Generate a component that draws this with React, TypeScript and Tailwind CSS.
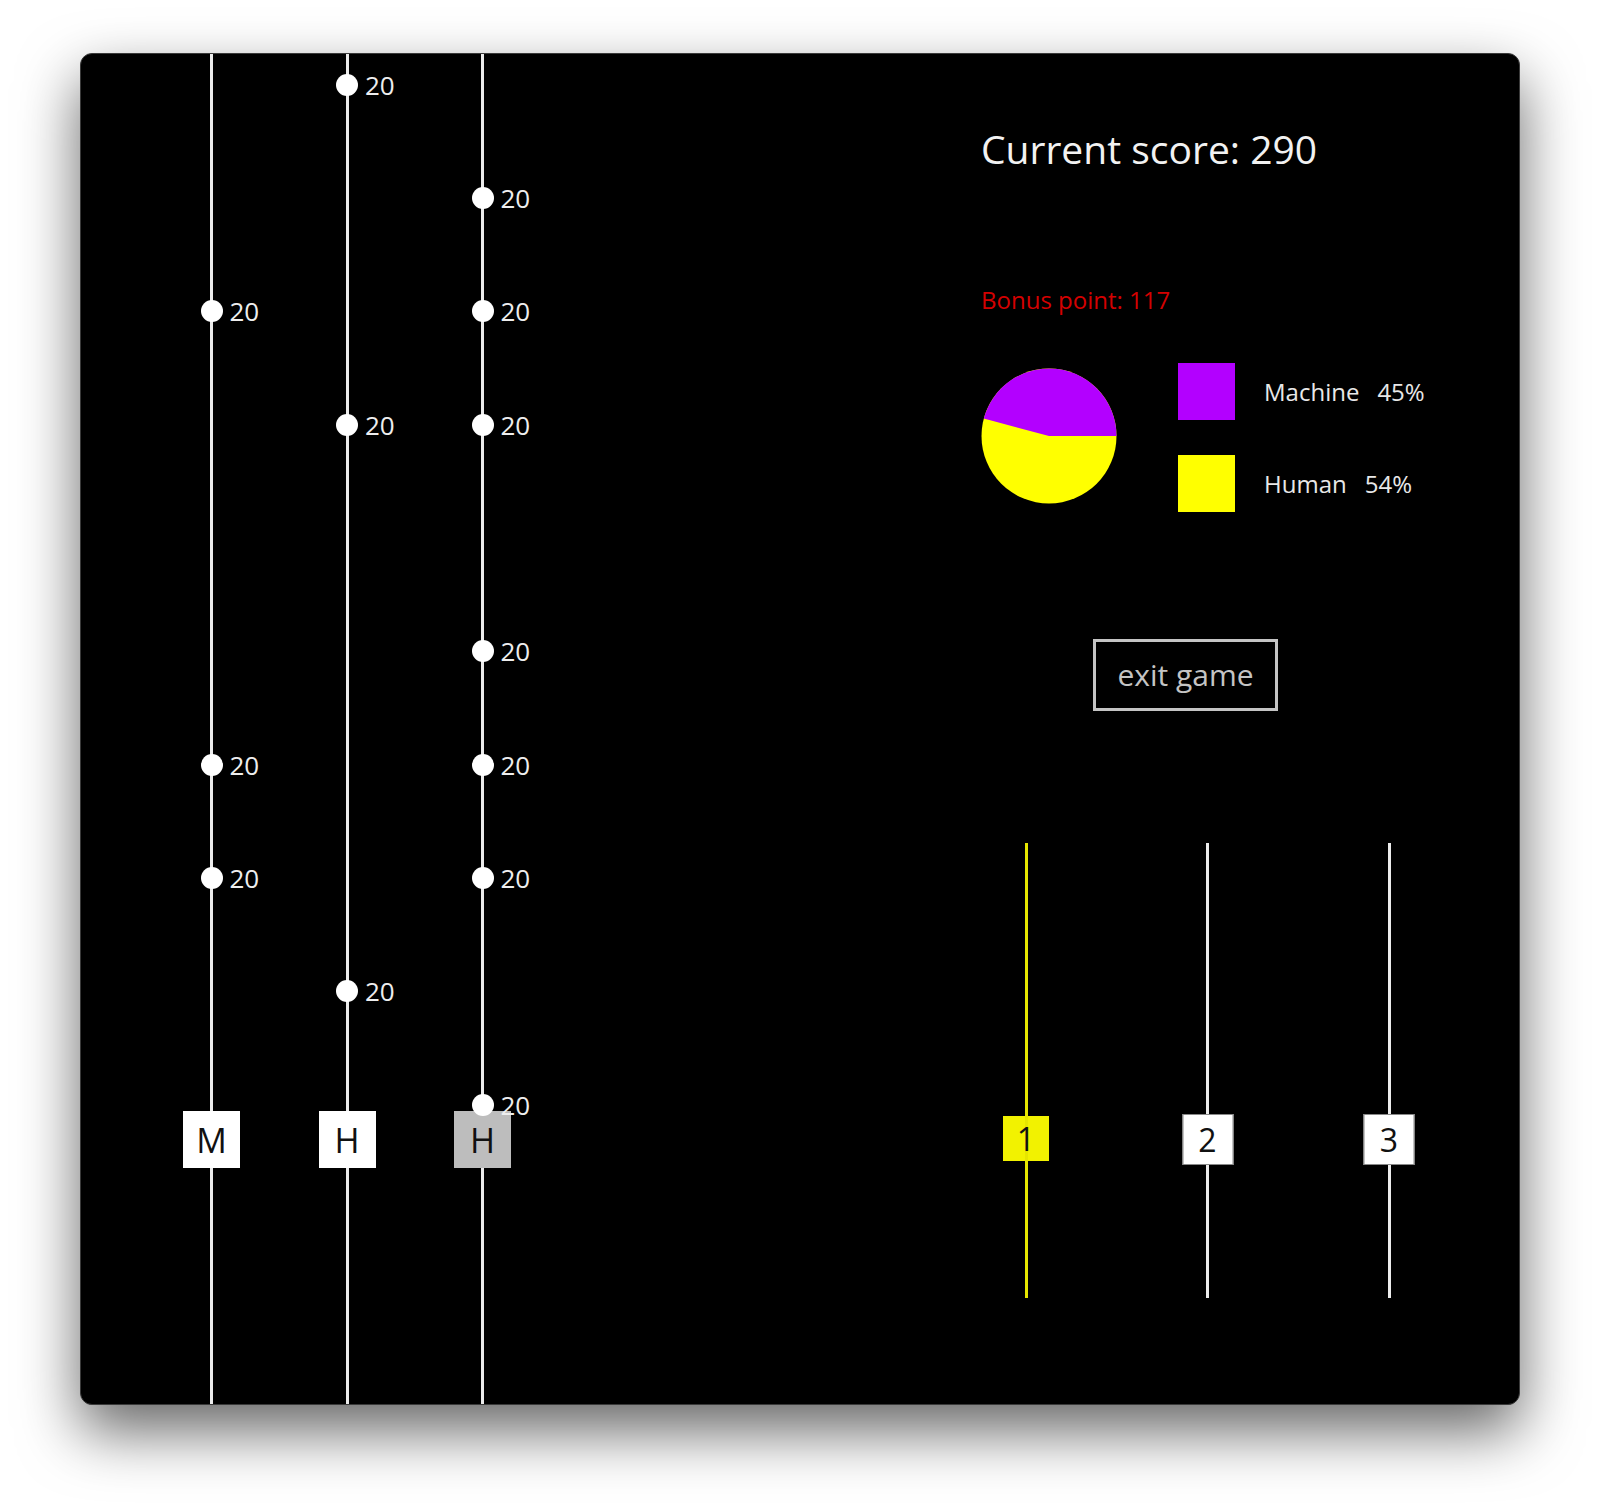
const lanes = [
  { label: "M", rows: [2, 6, 7], box: "bg-white" },
  { label: "H", rows: [0, 3, 8], box: "bg-white" },
  { label: "H", rows: [1, 2, 3, 5, 6, 7, 9], box: "bg-[#bdbdbd]" },
];

const sliders = [
  { n: "1", active: true },
  { n: "2", active: false },
  { n: "3", active: false },
];

function Lane({ label, rows, box }: { label: string; rows: number[]; box: string }) {
  return (
    <div className="relative h-full w-[135.5px] shrink-0">
      <div className="absolute top-0 bottom-0 left-[-1.5px] w-[3px] bg-[#ececec]" />
      <div
        className={`absolute left-[-28.5px] top-[1057px] flex h-[57px] w-[57px] items-center justify-center text-[34px] leading-none text-[#111] ${box}`}
      >
        {label}
      </div>
      <div className="relative flex flex-col pt-[19.7px]">
        {Array.from({ length: 10 }).map((_, i) => (
          <div key={i} className="h-[113.33px]">
            {rows.includes(i) && (
              <div className="-ml-[11px] flex h-[22px] items-center gap-[7px]">
                <span className="h-[22px] w-[22px] rounded-full bg-white" />
                <span className="text-[26px] leading-none text-[#eeeeee]">20</span>
              </div>
            )}
          </div>
        ))}
      </div>
    </div>
  );
}

function Pie() {
  return (
    <svg width="136" height="136" viewBox="0 0 136 136" className="mt-[5px] shrink-0">
      <circle cx="68" cy="68" r="67.5" fill="#ffff00" />
      <path d="M68 68 L135.5 68 A67.5 67.5 0 0 0 2.8 50.5 Z" fill="#b300ff" />
    </svg>
  );
}

export default function App() {
  return (
    <div className="min-h-[1511px] bg-white pt-[53px] pl-[80px] font-['Open_Sans',sans-serif]">
      <div className="flex h-[1352px] w-[1440px] overflow-hidden rounded-[12px] border border-[#3a3a3a] bg-black shadow-[0_26px_60px_rgba(0,0,0,0.6)]">
        <div className="flex h-full w-[900px] shrink-0 pl-[130.5px]">
          {lanes.map((l, i) => (
            <Lane key={i} {...l} />
          ))}
        </div>

        <div className="flex flex-col pt-[75px]">
          <div className="text-[39px] leading-none text-[#f2f2f2]">Current score: 290</div>
          <div className="mt-[120px] text-[24px] leading-none text-[#d40000]">Bonus point: 117</div>

          <div className="mt-[51px] flex items-start">
            <Pie />
            <div className="ml-[61px] flex flex-col gap-[35px]">
              <div className="flex items-center">
                <span className="h-[57px] w-[57px] bg-[#b300ff]" />
                <span className="ml-[29px] flex gap-[18px] text-[24px] leading-none text-[#e8e8e8]">
                  <span>Machine</span>
                  <span>45%</span>
                </span>
              </div>
              <div className="flex items-center">
                <span className="h-[57px] w-[57px] bg-[#ffff00]" />
                <span className="ml-[29px] flex gap-[18px] text-[24px] leading-none text-[#e8e8e8]">
                  <span>Human</span>
                  <span>54%</span>
                </span>
              </div>
            </div>
          </div>

          <button className="mt-[127px] ml-[112px] flex h-[72px] w-[185px] items-center justify-center border-[3px] border-[#c4c4c4] text-[30px] leading-none text-[#c4c4c4]">
            exit game
          </button>

          <div className="mt-[132px] ml-[20px] flex gap-[131.5px]">
            {sliders.map((s) => (
              <div key={s.n} className="relative flex h-[455px] w-[50px] justify-center">
                {s.active ? (
                  <>
                    <div className="absolute top-[273px] left-1/2 h-[45px] w-[46px] -translate-x-1/2 bg-[#f2f200]" />
                    <div className="relative h-full w-[3px] bg-[#e6e600]" />
                    <div className="absolute top-[273px] left-1/2 z-10 flex h-[45px] w-[46px] -translate-x-1/2 items-center justify-center text-[32px] leading-none text-[#111]">
                      {s.n}
                    </div>
                  </>
                ) : (
                  <>
                    <div className="h-full w-[3px] bg-[#ececec]" />
                    <div className="absolute top-[271px] left-1/2 flex h-[51px] w-[51px] -translate-x-1/2 items-center justify-center border border-[#888] bg-white text-[32px] leading-none text-[#111]">
                      {s.n}
                    </div>
                  </>
                )}
              </div>
            ))}
          </div>
        </div>
      </div>
    </div>
  );
}
